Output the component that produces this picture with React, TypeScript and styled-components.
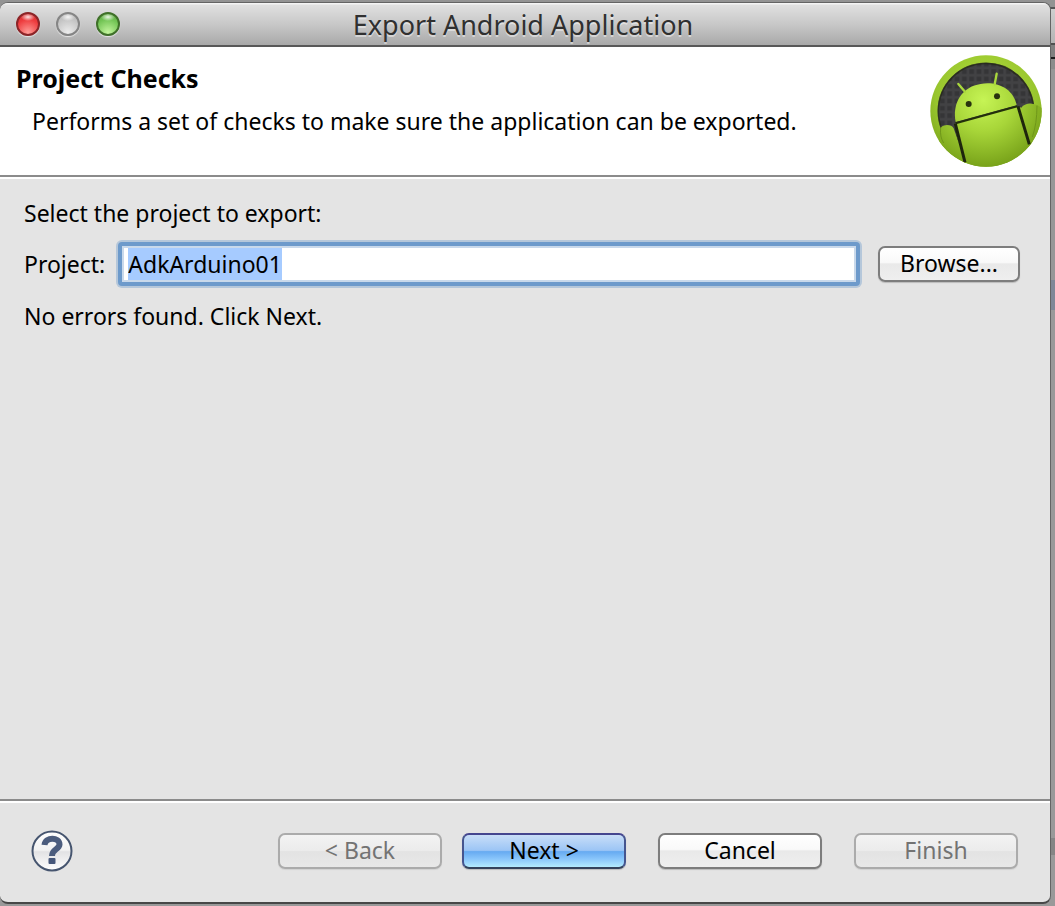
import React, { useEffect, useRef } from "react";
import styled, { createGlobalStyle } from "styled-components";

const GlobalStyle = createGlobalStyle`
  *, *::before, *::after { box-sizing: border-box; }
  body {
    margin: 0;
    font-family: "Noto Sans", "Open Sans", sans-serif;
    font-size: 23px;
    font-weight: 400;
    line-height: 28px;
    color: #000;
  }
`;

const Desktop = styled.div`
  display: flex;
  min-height: 100vh;
  padding: 2px 4px 2px 0;
  background: linear-gradient(
    #939393 0 7px, #555 7px 9px, #cfcfcf 9px, #b4b4b4 43px, #505050 43px 45px,
    #808080 45px 57px, #1c1c1c 57px 59px, #8c8c8c 59px 69px, #979797 69px 280px,
    #7f8797 280px 310px, #999 310px 838px, #858585 838px 855px, #999 855px
  );
`;

const Dialog = styled.main`
  flex: 1;
  min-width: 0;
  display: flex;
  flex-direction: column;
  overflow: hidden;
  border: solid #646464;
  border-width: 1px 1px 2px 0;
  border-bottom-color: #474747;
  border-radius: 8px;
  background: #e4e4e4;
`;

const TitleBar = styled.header`
  display: grid;
  grid-template-columns: 1fr auto 1fr;
  align-items: center;
  height: 44px;
  padding: 0 20px 0 16px;
  border-bottom: 2px solid #585858;
  background: linear-gradient(#f4f4f4 0 1px, #e0e0e0 2px, #c8c8c8 50%, #a9a9a9);
`;

const Lights = styled.div`
  display: flex;
  gap: 16px;
`;

const Light = styled.button<{ $rim: string; $top: string; $mid: string; $low: string }>`
  width: 24px;
  height: 24px;
  padding: 0;
  border: 2px solid ${(p) => p.$rim};
  border-radius: 50%;
  background:
    radial-gradient(ellipse 7px 4px at 50% 5px, rgba(255, 255, 255, 0.85), rgba(255, 255, 255, 0)),
    radial-gradient(circle at 50% 85%, ${(p) => p.$low}, ${(p) => p.$mid} 55%, ${(p) => p.$top});
  background-origin: border-box;
  box-shadow: 0 1px 1px rgba(255, 255, 255, 0.7);
`;

const WindowTitle = styled.h1`
  margin: 0;
  padding-top: 2px;
  font-size: 27px;
  font-weight: 400;
  line-height: 36px;
  color: #303030;
  text-shadow: 0 2px 0 rgba(255, 255, 255, 0.45);
`;

const Banner = styled.section`
  display: flex;
  justify-content: space-between;
  padding: 8px 8px 8px 16px;
  background: #fff;
`;

const BannerText = styled.div`
  padding-top: 9px;
`;

const Heading = styled.h2`
  margin: 0 0 15px;
  font-size: 25px;
  font-weight: 700;
  line-height: 28px;
`;

const Description = styled.p`
  margin: 0;
  padding-left: 16px;
`;

const Divider = styled.hr`
  width: 100%;
  height: 4px;
  margin: 0;
  border: 0;
  flex: none;
  background: linear-gradient(#8b8b8b 0 2px, #fff 2px);
`;

const Content = styled.section`
  flex: 1;
  padding: 20px 30px 20px 24px;
`;

const Line = styled.p`
  margin: 0;
`;

const ProjectRow = styled.div`
  display: flex;
  align-items: center;
  margin: 15px 0 16px;
`;

const ProjectInput = styled.input`
  flex: 1;
  min-width: 0;
  height: 44px;
  margin: 0 18px 0 13px;
  padding: 0 6px;
  border: 4px solid #6d9acb;
  border-radius: 4px;
  outline: none;
  background: #fff;
  box-shadow: 0 0 0 2px rgba(109, 154, 203, 0.4), inset 0 0 0 2px #c9d9eb;
  font: inherit;
  color: #000;
  caret-color: transparent;

  &::selection {
    background: rgba(165, 202, 255, 0.99);
    color: #000;
  }
`;

const Button = styled.button<{ $primary?: boolean }>`
  width: 164px;
  height: 36px;
  padding: 0 0 2px;
  border: 2px solid #7d7d7d;
  border-radius: 7px;
  background: linear-gradient(#fff, #f9f9f9 45%, #e9e9e9 50%, #efefef);
  box-shadow: 0 1px 1px rgba(0, 0, 0, 0.18);
  font: inherit;
  line-height: 28px;
  color: #000;

  ${(p) =>
    p.$primary &&
    `
    border-color: #45468f #45558f #34435c;
    background: linear-gradient(#c8def8, #9cc5f5 48%, #66aaf1 52%, #8ac6fb 75%, #b4ecff);
  `}

  &:disabled {
    border-color: #ababab;
    background: linear-gradient(#f3f3f3, #ececec 48%, #e3e3e3 52%, #e8e8e8);
    box-shadow: 0 1px 1px rgba(0, 0, 0, 0.08);
    color: #737373;
  }
`;

const BrowseButton = styled(Button)`
  width: 142px;
`;

const Footer = styled.footer`
  display: flex;
  align-items: center;
  justify-content: space-between;
  padding: 26px 32px 29px 30px;
`;

const HelpButton = styled.button`
  display: flex;
  padding: 0;
  border: 0;
  background: none;
`;

const Actions = styled.div`
  display: flex;
  gap: 32px;
`;

const StepButtons = styled.div`
  display: flex;
  gap: 20px;
`;

function AndroidLogo() {
  return (
    <svg width="112" height="112" viewBox="45 164 336 336" role="img" aria-label="Android">
      <defs>
        <radialGradient id="ring" cx="50%" cy="35%" r="65%">
          <stop offset="0" stopColor="#b5e23c" />
          <stop offset="0.7" stopColor="#98c52e" />
          <stop offset="1" stopColor="#7ba419" />
        </radialGradient>
        <radialGradient id="skin" gradientUnits="userSpaceOnUse" cx="205" cy="300" r="205">
          <stop offset="0" stopColor="#c6f455" />
          <stop offset="0.45" stopColor="#a8d639" />
          <stop offset="1" stopColor="#76a018" />
        </radialGradient>
        <pattern id="weave" width="22" height="22" patternUnits="userSpaceOnUse">
          <rect width="22" height="22" fill="#353537" />
          <path d="M0 5H22M5 0V22" stroke="#4b4b4d" strokeWidth="8" opacity="0.55" />
        </pattern>
        <clipPath id="disc">
          <circle cx="213" cy="332" r="167" />
        </clipPath>
      </defs>
      <circle cx="213" cy="332" r="167" fill="url(#ring)" />
      <circle cx="213" cy="332" r="145" fill="url(#weave)" />
      <circle cx="213" cy="332" r="143" fill="none" stroke="#20230f" strokeWidth="5" opacity="0.6" />
      <g clipPath="url(#disc)">
        <path d="M122 369L305 319L322 322L352 430L340 500H155L140 480L122 380Z" fill="url(#skin)" />
        <path d="M74 392Q76 374 96 374Q110 374 116 384L150 482L152 510H60Z" fill="url(#skin)" />
        <path d="M320 320Q338 302 366 314L392 330V450L345 470Z" fill="url(#skin)" />
        <path d="M77 382Q74 410 86 428M366 316Q366 370 352 410" fill="none" stroke="#6f961a" strokeWidth="3" />
        <path d="M122 365C112 316 134 272 176 256C230 236 294 256 305 315Z" fill="url(#skin)" />
        <path d="M122 369L307 318" stroke="#23300b" strokeWidth="6" />
        <path d="M121 370L150 486M309 318L343 432" stroke="#1e260d" strokeWidth="9" />
      </g>
      <path d="M130 251L150 274M245 220L239 252" stroke="#a9d83c" strokeWidth="7" strokeLinecap="round" />
      <circle cx="161" cy="311" r="9" fill="#28330e" />
      <circle cx="246" cy="288" r="9" fill="#28330e" />
    </svg>
  );
}

function HelpIcon() {
  return (
    <svg width="44" height="44" viewBox="0 0 44 44" aria-hidden="true">
      <defs>
        <linearGradient id="helpFace" x1="0" y1="0" x2="0" y2="1">
          <stop offset="0" stopColor="#fff" />
          <stop offset="0.48" stopColor="#f2f2f2" />
          <stop offset="0.52" stopColor="#e2e2e4" />
          <stop offset="1" stopColor="#fff" />
        </linearGradient>
      </defs>
      <circle cx="22" cy="22" r="19.5" fill="url(#helpFace)" stroke="#46556f" strokeWidth="2" />
      <path
        d="M14.500 16C15.500 7.500 29.500 8 29.500 15.500C29.200 20.500 22 20 22 27"
        fill="none"
        stroke="#4c5d7e"
        strokeWidth="6"
      />
      <rect x="18.500" y="29" width="7" height="6" rx="1" fill="#46577a" />
    </svg>
  );
}

export default function App() {
  const project = useRef<HTMLInputElement>(null);

  useEffect(() => {
    project.current?.focus();
    project.current?.select();
  }, []);

  return (
    <>
      <GlobalStyle />
      <Desktop>
        <Dialog>
          <TitleBar>
            <Lights>
              <Light aria-label="Close" $rim="#8c2528" $top="#c0282b" $mid="#ee3c3e" $low="#ff9c98" />
              <Light aria-label="Minimize" $rim="#858585" $top="#a9a9a9" $mid="#c6c6c6" $low="#ececec" />
              <Light aria-label="Zoom" $rim="#3f7029" $top="#4c9331" $mid="#74c556" $low="#c4f59e" />
            </Lights>
            <WindowTitle>Export Android Application</WindowTitle>
          </TitleBar>
          <Banner>
            <BannerText>
              <Heading>Project Checks</Heading>
              <Description>Performs a set of checks to make sure the application can be exported.</Description>
            </BannerText>
            <AndroidLogo />
          </Banner>
          <Divider />
          <Content>
            <Line>Select the project to export:</Line>
            <ProjectRow>
              <label htmlFor="project">Project:</label>
              <ProjectInput id="project" ref={project} type="text" defaultValue="AdkArduino01" />
              <BrowseButton type="button">Browse...</BrowseButton>
            </ProjectRow>
            <Line>No errors found. Click Next.</Line>
          </Content>
          <Divider />
          <Footer>
            <HelpButton type="button" aria-label="Help">
              <HelpIcon />
            </HelpButton>
            <Actions>
              <StepButtons>
                <Button type="button" disabled>&lt; Back</Button>
                <Button type="button" $primary>Next &gt;</Button>
              </StepButtons>
              <Button type="button">Cancel</Button>
              <Button type="button" disabled>Finish</Button>
            </Actions>
          </Footer>
        </Dialog>
      </Desktop>
    </>
  );
}
